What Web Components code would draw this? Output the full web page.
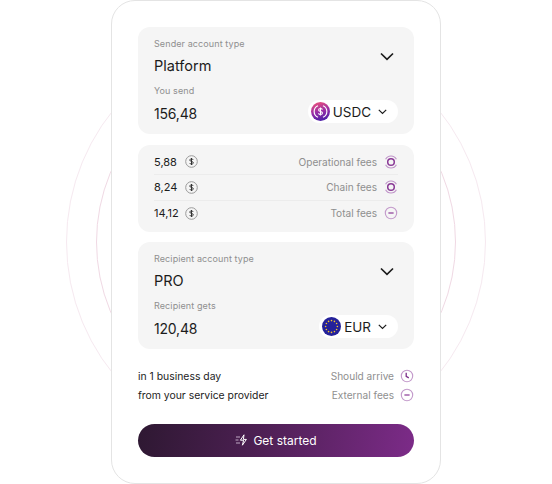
<!DOCTYPE html>
<html lang="en">
<head>
<meta charset="utf-8">
<title>Fees</title>
<style>
  html, body { margin: 0; padding: 0; background: #fff; }
  body { font-family: Inter, "Liberation Sans", sans-serif; }
</style>
</head>
<body>
<quote-card>
  <account-panel label="Sender account type" value="Platform" sublabel="You send" amount="156,48">
    <coin-pill code="USDC" coin="usdc"></coin-pill>
  </account-panel>
  <fee-list>
    <fee-row amount="5,88" label="Operational fees" icon="ring"></fee-row>
    <fee-row amount="8,24" label="Chain fees" icon="ring"></fee-row>
    <fee-row amount="14,12" label="Total fees" icon="minus"></fee-row>
  </fee-list>
  <account-panel label="Recipient account type" value="PRO" sublabel="Recipient gets" amount="120,48">
    <coin-pill code="EUR" coin="eur"></coin-pill>
  </account-panel>
  <info-row text="in 1 business day" label="Should arrive" icon="clock" slot="info"></info-row>
  <info-row text="from your service provider" label="External fees" icon="minus" slot="info"></info-row>
  <start-button slot="action">Get started</start-button>
</quote-card>

<script>
const ICONS = {
  ring: `<svg width="14" height="14" viewBox="0 0 14 14" fill="none" stroke="#8a3a96">
      <circle cx="7" cy="7" r="3.3" stroke-width="1.5"/>
      <path d="M1.6 4.2A6.1 6.1 0 0 1 12.4 4.2M1.6 9.8A6.1 6.1 0 0 0 12.4 9.8" stroke="#bf93c8" stroke-width="1.1"/>
    </svg>`,
  minus: `<svg width="14" height="14" viewBox="0 0 14 14" fill="none" stroke="#c39acb">
      <circle cx="7" cy="7" r="5.7" stroke-width="1.1"/>
      <path d="M4.4 7H9.6" stroke="#8a3a96" stroke-width="1.2"/>
    </svg>`,
  clock: `<svg width="14" height="14" viewBox="0 0 14 14" fill="none" stroke="#c39acb">
      <circle cx="7" cy="7" r="5.7" stroke-width="1.1"/>
      <path d="M6.2 3.8V7.4L8.8 8.9" stroke="#7d2f8a" stroke-width="1.3"/>
    </svg>`
};

class QuoteCard extends HTMLElement {
  constructor() {
    super();
    this.attachShadow({ mode: 'open' });
    this.shadowRoot.innerHTML = `
    <style>
      :host {
        display: block;
        position: relative;
        width: 552px;
        height: 484px;
        overflow: hidden;
      }
      .ring {
        position: absolute;
        border-radius: 50%;
        box-sizing: border-box;
      }
      .ring.outer {
        left: 66px; top: 32px; width: 420px; height: 420px;
        border: 1px solid #f6e9f0;
      }
      .ring.inner {
        left: 96px; top: 62px; width: 360px; height: 360px;
        border: 1px solid #f0d9e4;
      }
      .card {
        position: relative;
        box-sizing: border-box;
        width: 330px;
        height: 484px;
        margin: 0 auto;
        padding: 26px 26px 0;
        background: #fff;
        border: 1px solid #e4e4e4;
        border-radius: 24px;
        display: flex;
        flex-direction: column;
      }
      .panels {
        display: flex;
        flex-direction: column;
        gap: 10.5px;
      }
      .info {
        display: flex;
        flex-direction: column;
        gap: 5px;
        margin-top: 20px;
      }
      .action { margin-top: 22px; }
    </style>
    <div class="ring outer"></div>
    <div class="ring inner"></div>
    <div class="card">
      <div class="panels"><slot></slot></div>
      <div class="info"><slot name="info"></slot></div>
      <div class="action"><slot name="action"></slot></div>
    </div>
    `;
  }
}

class AccountPanel extends HTMLElement {
  constructor() {
    super();
    this.attachShadow({ mode: 'open' });
  }

  connectedCallback() {
    this.shadowRoot.innerHTML = `
    <style>
      :host {
        display: block;
        box-sizing: border-box;
        height: 107px;
        padding: 11px 16px 0;
        background: #f5f5f5;
        border-radius: 12px;
        color: #1c1c1c;
      }
      .small {
        font-size: 9px;
        line-height: 12px;
        color: #8f8f8f;
        letter-spacing: 0.1px;
      }
      .big {
        font-size: 14.5px;
        line-height: 20px;
      }
      .top {
        display: flex;
        justify-content: space-between;
        align-items: center;
      }
      .top .big { margin-top: 6px; }
      .top svg { margin-top: -2px; margin-right: 4px; }
      .sub { margin-top: 9px; }
      .bottom {
        display: flex;
        justify-content: space-between;
        align-items: flex-start;
        margin-top: 3px;
      }
      .amount {
        padding-top: 4px;
        font-size: 14px;
        letter-spacing: -0.2px;
      }
    </style>
    <div class="top">
      <div>
        <div class="small">${this.getAttribute('label')}</div>
        <div class="big">${this.getAttribute('value')}</div>
      </div>
      <svg width="14" height="9" viewBox="0 0 14 9" fill="none" stroke="#1c1c1c" stroke-width="1.7">
        <path d="M1 1.5L7 7.3L13 1.5"/>
      </svg>
    </div>
    <div class="small sub">${this.getAttribute('sublabel')}</div>
    <div class="bottom">
      <div class="big amount">${this.getAttribute('amount')}</div>
      <slot></slot>
    </div>
    `;
  }
}

class CoinPill extends HTMLElement {
  constructor() {
    super();
    this.attachShadow({ mode: 'open' });
  }

  connectedCallback() {
    const stars = [];
    for (let i = 0; i < 12; i++) {
      const a = i * Math.PI / 6;
      stars.push(`<circle cx="${(10 + 6.2 * Math.sin(a)).toFixed(2)}" cy="${(10 - 6.2 * Math.cos(a)).toFixed(2)}" r="0.85" fill="#f2c230"/>`);
    }
    const usdc = `
      <svg width="19" height="19" viewBox="0 0 20 20" fill="none">
        <defs><linearGradient id="g" x1="0.3" y1="0" x2="0.6" y2="1">
          <stop offset="0" stop-color="#ea4f7c"/><stop offset="0.5" stop-color="#9a2fa6"/><stop offset="1" stop-color="#4a1fa8"/>
        </linearGradient></defs>
        <circle cx="10" cy="10" r="10" fill="url(#g)"/>
        <path d="M7.4 3.9A6.6 6.6 0 0 0 7.4 16.1M12.6 3.9A6.6 6.6 0 0 1 12.6 16.1" stroke="#fff" stroke-width="1.2"/>
        <path d="M12 8.1C11.7 7.2 10.9 6.9 10 6.9C8.9 6.9 8 7.4 8 8.4C8 10.6 12.1 9.3 12.1 11.6C12.1 12.6 11.1 13.1 10 13.1C9 13.1 8.2 12.7 7.9 11.8M10 5.7V14.3" stroke="#fff" stroke-width="1.1"/>
      </svg>`;
    const eur = `
      <svg width="19" height="19" viewBox="0 0 20 20">
        <circle cx="10" cy="10" r="10" fill="#24219a"/>
        ${stars.join('')}
      </svg>`;
    this.shadowRoot.innerHTML = `
    <style>
      :host {
        display: flex;
        align-items: center;
        box-sizing: border-box;
        height: 23px;
        padding: 0 11px 0 3px;
        background: #fff;
        border-radius: 12px;
        font-size: 13.5px;
        color: #1c1c1c;
      }
      span { margin: 0 7px 0 3px; }
    </style>
    ${this.getAttribute('coin') === 'usdc' ? usdc : eur}
    <span>${this.getAttribute('code')}</span>
    <svg width="9" height="6" viewBox="0 0 9 6" fill="none" stroke="#1c1c1c" stroke-width="1.2">
      <path d="M0.8 0.9L4.5 4.5L8.2 0.9"/>
    </svg>
    `;
  }
}

class FeeList extends HTMLElement {
  constructor() {
    super();
    this.attachShadow({ mode: 'open' });
    this.shadowRoot.innerHTML = `
    <style>
      :host {
        display: block;
        box-sizing: border-box;
        height: 87px;
        padding: 5px 16px 0;
        background: #f5f5f5;
        border-radius: 12px;
      }
    </style>
    <slot></slot>
    `;
  }
}

class FeeRow extends HTMLElement {
  constructor() {
    super();
    this.attachShadow({ mode: 'open' });
  }

  connectedCallback() {
    this.shadowRoot.innerHTML = `
    <style>
      :host {
        display: flex;
        align-items: center;
        box-sizing: border-box;
        height: 25.5px;
        border-bottom: 1px solid #ececec;
        font-size: 10.1px;
      }
      :host(:last-child) { border-bottom: 0; }
      .amount { width: 31px; color: #1c1c1c; font-size: 11px; }
      .coin { display: block; }
      .label { margin-left: auto; margin-right: 7px; color: #8f8f8f; }
      .icon { width: 14px; height: 14px; }
    </style>
    <span class="amount">${this.getAttribute('amount')}</span>
    <svg class="coin" width="13" height="13" viewBox="0 0 13 13" fill="none" stroke="#333">
      <circle cx="6.5" cy="6.5" r="5.8" stroke="#9a9a9a" stroke-width="1"/>
      <path d="M8.2 4.9C8 4.2 7.3 3.9 6.5 3.9C5.6 3.9 4.8 4.3 4.8 5.1C4.8 6.9 8.3 5.9 8.3 7.9C8.3 8.7 7.4 9.1 6.5 9.1C5.7 9.1 5 8.8 4.7 8.1M6.5 3V10" stroke-width="1"/>
    </svg>
    <span class="label">${this.getAttribute('label')}</span>
    <span class="icon">${ICONS[this.getAttribute('icon')]}</span>
    `;
  }
}

class InfoRow extends HTMLElement {
  constructor() {
    super();
    this.attachShadow({ mode: 'open' });
  }

  connectedCallback() {
    this.shadowRoot.innerHTML = `
    <style>
      :host {
        display: flex;
        align-items: center;
        height: 14px;
        font-size: 10.4px;
        color: #1c1c1c;
      }
      .label { margin-left: auto; margin-right: 6px; color: #8f8f8f; font-size: 10.1px; }
      .icon { width: 14px; height: 14px; }
    </style>
    <span>${this.getAttribute('text')}</span>
    <span class="label">${this.getAttribute('label')}</span>
    <span class="icon">${ICONS[this.getAttribute('icon')]}</span>
    `;
  }
}

class StartButton extends HTMLElement {
  constructor() {
    super();
    this.attachShadow({ mode: 'open' });
    this.shadowRoot.innerHTML = `
    <style>
      :host {
        display: flex;
        align-items: center;
        justify-content: center;
        gap: 4px;
        box-sizing: border-box;
        height: 33px;
        padding-bottom: 1px;
        border-radius: 17px;
        background: linear-gradient(97deg, #2e1832 0%, #4a1f50 40%, #7c2b88 100%);
        color: #fff;
        font-size: 12px;
      }
    </style>
    <svg width="14" height="12" viewBox="0 0 14 12" fill="none" stroke="#fff" stroke-width="1">
      <path d="M9 0.8L5.4 6.2H8.6L7.4 11.2L11.4 5.4H8.4Z" stroke-linejoin="round"/>
      <path d="M1 3H5M0.5 6H3.5M1 9H5" stroke="#bfa8c4"/>
    </svg>
    <slot></slot>
    `;
  }
}

customElements.define('quote-card', QuoteCard);
customElements.define('account-panel', AccountPanel);
customElements.define('coin-pill', CoinPill);
customElements.define('fee-list', FeeList);
customElements.define('fee-row', FeeRow);
customElements.define('info-row', InfoRow);
customElements.define('start-button', StartButton);
</script>
</body>
</html>
